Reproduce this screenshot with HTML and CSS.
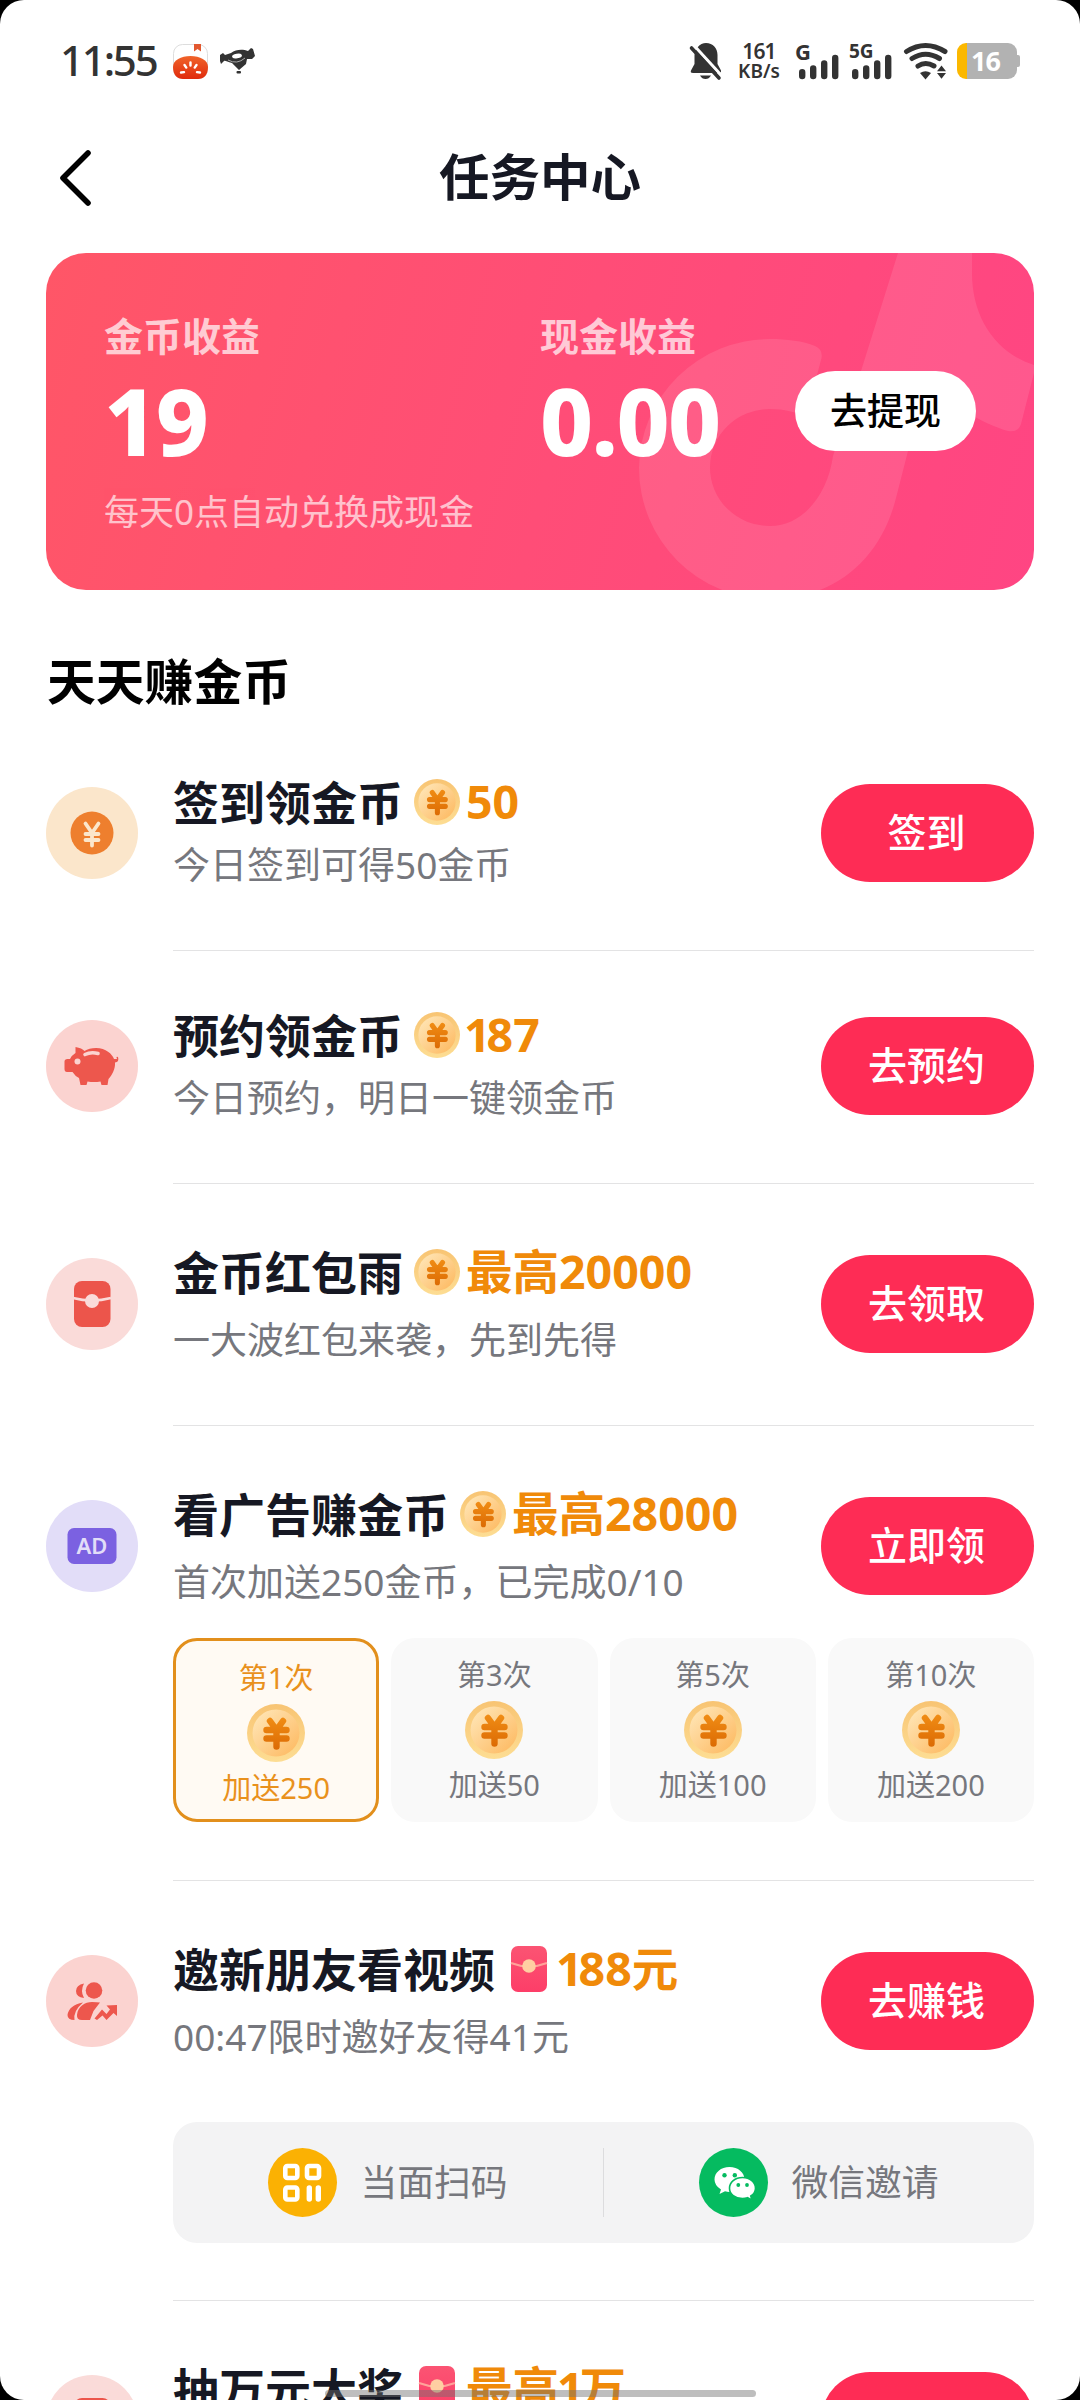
FILE: index.html
```html
<!DOCTYPE html>
<html lang="zh-CN">
<head>
<meta charset="utf-8">
<title>任务中心</title>
<link rel="stylesheet" href="styles.css">
</head>
<body>
<svg class="sprite" aria-hidden="true">
  <defs>
    <linearGradient id="coin-rim" x1="0" y1="0" x2="0" y2="1"><stop offset="0" stop-color="#f8c473"/><stop offset="1" stop-color="#fddd93"/></linearGradient>
    <linearGradient id="coin-face" x1="0" y1="0" x2="1" y2="1"><stop offset="0" stop-color="#ffe9bd"/><stop offset="1" stop-color="#fdb75c"/></linearGradient>
    <linearGradient id="coin-yen" gradientUnits="userSpaceOnUse" x1="0" y1="14" x2="0" y2="45"><stop offset="0" stop-color="#f08c14"/><stop offset="1" stop-color="#dc6b04"/></linearGradient>
    <linearGradient id="packet" x1="0" y1="0" x2="0" y2="1"><stop offset="0" stop-color="#fb5473"/><stop offset="1" stop-color="#fd3e68"/></linearGradient>
    <linearGradient id="tomato" x1="0" y1="0" x2="0" y2="1"><stop offset="0" stop-color="#f0642a"/><stop offset="1" stop-color="#e02a0c"/></linearGradient>
  </defs>
  <symbol id="coin" viewBox="0 0 58 58">
    <circle cx="29" cy="29" r="29" fill="url(#coin-rim)"/>
    <circle cx="29" cy="29" r="23.5" fill="url(#coin-face)"/>
    <path d="M23 17 29.500 26 36 17M19.500 26H39.500M19.500 34.500H39.500M29.500 26V42.500" fill="none" stroke="url(#coin-yen)" stroke-width="6.400" stroke-linecap="round" stroke-linejoin="round"/>
  </symbol>
  <symbol id="envelope" viewBox="0 0 46 46">
    <rect x="5" width="36" height="46" rx="7" fill="url(#packet)"/>
    <path d="M5 17Q23 24 41 17" fill="none" stroke="#ffa39a" stroke-width="2"/>
    <circle cx="23" cy="20" r="6.8" fill="#ffcfa2"/>
  </symbol>
  <symbol id="hongbao" viewBox="0 0 92 92">
    <circle cx="46" cy="46" r="46" fill="#fadbd9"/>
    <rect x="28" y="23" width="36.500" height="46" rx="8" fill="#ec554b"/>
    <path d="M27 40Q46 45 65 40" fill="none" stroke="#fadbd9" stroke-width="2.400"/>
    <circle cx="46" cy="43" r="7" fill="#fadbd9"/>
  </symbol>
</svg>

<div class="screen">
  <header class="status">
    <span class="clock">11:55</span>
    <svg class="app-tomato" viewBox="0 0 35 35">
      <rect x=".5" y=".5" width="34" height="34" rx="9" fill="#fff" stroke="#ddd"/>
      <path d="M0 23C0 16 8 12 17.500 12S35 16 35 23C35 31 31 35 25 35H10C4 35 0 31 0 23Z" fill="url(#tomato)"/>
      <path d="M21 0h7v7.500l-3.500-2.500-3.500 2.500z" fill="#e2582f"/>
      <path d="M17.500 18.500v3M11.500 21l1.800 2.600M23.500 21l-1.800 2.600M8 28.500l3-.4M27 28.500l-3-.4" stroke="#fff" stroke-width="2.400" stroke-linecap="round"/>
    </svg>
    <svg class="app-bird" viewBox="0 0 35 26">
      <path d="M0 7 3 5 5 7 11 5C16 1 23 1 28 3L31 0 33 1 35 8 32 11 27 11 26 16 19 22 12 15C7 14 5 12 4 13L1 16 0 13Z" fill="#333"/>
      <ellipse cx="17" cy="8" rx="5" ry="2.300" fill="#fff" transform="rotate(-10 17 8)"/>
      <path d="M8 12Q17 17 25 10" fill="none" stroke="#aaa" stroke-width="1"/>
      <rect x="16.500" y="23" width="4.500" height="2.500" rx="1" fill="#333"/>
    </svg>
    <div class="status-right">
      <svg class="bell" viewBox="0 0 31 36">
        <path d="M7 5C10 1 13 0 16 0C23 0 27.500 5 27.500 12V21L31 27.500Q31.500 30 29 30H3Q0 30 1 27.500L4.500 21V12Q4.500 8 7 5ZM10 32.500H21Q19 36 15.500 36T10 32.500Z" fill="#333"/>
        <path d="M4.500 3 31.500 32.500" stroke="#fff" stroke-width="3"/>
        <path d="M1.500 5 29 35" stroke="#333" stroke-width="3.600" stroke-linecap="round"/>
      </svg>
      <div class="speed"><span>161</span><span>KB/s</span></div>
      <svg class="signal" viewBox="0 0 43 36">
        <text x="-1" y="16.500" class="net">G</text>
        <path d="M6.200 29.200V33M17.200 25.500V33M28.200 20.500V33M39.200 15V33" stroke="#333" stroke-width="6.400" stroke-linecap="round"/>
      </svg>
      <svg class="signal" viewBox="0 0 43 36">
        <text x="-1" y="14.500" class="net net-5g">5G</text>
        <path d="M5.200 29.200V33M16.200 25.500V33M27.200 20.500V33M38.200 15V33" stroke="#333" stroke-width="6.400" stroke-linecap="round"/>
      </svg>
      <svg class="wifi" viewBox="0 0 44 36">
        <g fill="none" stroke="#333" stroke-width="5" stroke-linecap="round"><path d="M2.500 8.500Q21.500-3.500 41 8.500"/><path d="M8 15.500Q21.500 7 35.500 15.500"/><path d="M14 23Q21.500 18 30 23"/></g>
        <path d="M16 30Q21.500 26.500 27 30L21.500 36.500Z" fill="#333"/>
        <path d="M33 28.300 37.500 22.500 42 28.300ZM33 30 37.500 35.800 42 30Z" fill="#333"/>
      </svg>
      <div class="battery"><span>16</span></div>
    </div>
  </header>

  <nav class="nav">
    <svg class="back" viewBox="0 0 36 60"><path d="M30 5 5 30 30 55" fill="none" stroke="#000" stroke-width="5.600" stroke-linecap="round" stroke-linejoin="round"/></svg>
    <h1>任务中心</h1>
  </nav>

  <section class="wallet">
    <svg class="wallet-mark" viewBox="0 0 988 337"><path fill="#fff" fill-opacity=".1" d="M852 0 815 118 787 203C782 240 758 273 724 273A59.500 58.500 0 0 1 664 214A59.500 58.500 0 0 1 724 156C738 156 750 159 760 164L775 107Q778 97 769 93C757 88 741 86 724 86A131 130 0 0 0 593 215A131 131 0 0 0 724 346C790 346 835 305 850 245L862 198 884 128C905 152 935 170 962 178Q972 180 975 171L988 120V112C950 100 926 65 926 20V0Z"/></svg>
    <div class="earn earn-coin">
      <span class="earn-label">金币收益</span>
      <strong class="earn-value">19</strong>
      <span class="earn-note">每天0点自动兑换成现金</span>
    </div>
    <div class="earn">
      <span class="earn-label">现金收益</span>
      <strong class="earn-value">0.00</strong>
    </div>
    <button class="withdraw">去提现</button>
  </section>

  <h2>天天赚金币</h2>

  <ul class="tasks">
    <li class="task compact">
      <svg class="task-icon" viewBox="0 0 92 92"><circle cx="46" cy="46" r="46" fill="#fbe6cb"/><circle cx="46" cy="46" r="21.500" fill="#ee7f2e"/><path d="M39.500 36.500 46 46 52.500 36.500M39.500 47H52.500M39.500 53H52.500M46 46V58.500" fill="none" stroke="#fbe6cb" stroke-width="3.800" stroke-linecap="round"/></svg>
      <div class="task-body"><div class="task-head">
        <div class="task-text"><p class="task-title">签到领金币<svg class="mark"><use href="#coin"/></svg><b>50</b></p><p class="task-sub">今日签到可得50金币</p></div>
        <button class="go">签到</button>
      </div></div>
    </li>
    <li class="task compact">
      <svg class="task-icon" viewBox="0 0 92 92"><circle cx="46" cy="46" r="46" fill="#fbd3d0"/><path d="M29.500 27Q36 28 38.500 31Q43 28 50 28C60 28 66 34 68 39L71 39Q69.500 36 72 37Q73.500 42 69 42.500C69.500 49 66 55 62.500 59L61.500 65H55.500L54.500 61.500Q48 62.500 41.500 61.500L40.500 65H34.500L33 58Q29 56 26.500 52H21Q18.500 52 18.500 49V41.500Q18.500 39 21.500 39H24Q26 35 29.500 33Z" fill="#ed574d"/><path d="M39 34.500Q45 31.500 52 33.500" stroke="#fbd3d0" stroke-width="3.600" stroke-linecap="round" fill="none"/><circle cx="31.500" cy="41.500" r="3" fill="#fbd3d0"/></svg>
      <div class="task-body"><div class="task-head">
        <div class="task-text"><p class="task-title">预约领金币<svg class="mark"><use href="#coin"/></svg><b><span class="one">1</span>87</b></p><p class="task-sub">今日预约，明日一键领金币</p></div>
        <button class="go">去预约</button>
      </div></div>
    </li>
    <li class="task">
      <svg class="task-icon"><use href="#hongbao"/></svg>
      <div class="task-body"><div class="task-head">
        <div class="task-text"><p class="task-title">金币红包雨<svg class="mark"><use href="#coin"/></svg><b>最高20000</b></p><p class="task-sub">一大波红包来袭，先到先得</p></div>
        <button class="go">去领取</button>
      </div></div>
    </li>
    <li class="task with-steps">
      <svg class="task-icon" viewBox="0 0 92 92"><circle cx="46" cy="46" r="46" fill="#e2ddf8"/><rect x="21.500" y="28" width="49" height="36" rx="6.500" fill="#7b61e1"/><text x="46" y="54" class="ad">AD</text></svg>
      <div class="task-body"><div class="task-head">
        <div class="task-text"><p class="task-title">看广告赚金币<svg class="mark"><use href="#coin"/></svg><b>最高28000</b></p><p class="task-sub">首次加送250金币，已完成0/10</p></div>
        <button class="go">立即领</button>
      </div>
      <div class="steps">
        <div class="step active"><span>第1次</span><svg><use href="#coin"/></svg><span>加送250</span></div>
        <div class="step"><span>第3次</span><svg><use href="#coin"/></svg><span>加送50</span></div>
        <div class="step"><span>第5次</span><svg><use href="#coin"/></svg><span>加送100</span></div>
        <div class="step"><span>第10次</span><svg><use href="#coin"/></svg><span>加送200</span></div>
      </div></div>
    </li>
    <li class="task with-share">
      <svg class="task-icon" viewBox="0 0 92 92"><circle cx="46" cy="46" r="46" fill="#fbd3d0"/><g fill="#ed574d"><circle cx="48" cy="35.500" r="8.300"/><path d="M38 28.500Q30 30 30 36T38 43Q34 36 38 28.500Z"/><path d="M54 47.500 47.500 56 44 65H36Q30.500 65 31 60C32 51 39 47 46 47Q51 47 54 47.500Z"/><path d="M37 47.500Q27 56 28.500 65Q21.500 65 21.500 60Q23 50 37 47.500Z"/><path d="M60.500 50.500 71 50V61L67.500 58 60.500 65 56.500 60.500 51 65 48.500 63.500 56 54.500 60.500 59 64 54.500Z"/></g></svg>
      <div class="task-body"><div class="task-head">
        <div class="task-text"><p class="task-title">邀新朋友看视频<svg class="mark"><use href="#envelope"/></svg><b><span class="one">1</span>88元</b></p><p class="task-sub">00:47限时邀好友得41元</p></div>
        <button class="go">去赚钱</button>
      </div>
      <div class="share">
        <div class="share-item"><svg viewBox="0 0 69 69"><circle cx="34.500" cy="34.500" r="34.500" fill="#fbb103"/><g fill="none" stroke="#fff" stroke-width="4.600"><rect x="17.300" y="18" width="12" height="12" rx="2"/><rect x="39" y="18" width="12" height="12" rx="2"/><rect x="17.300" y="39.500" width="12" height="12" rx="2"/></g><path d="M41.300 39.900V51.100M50.300 39.900V51.100" stroke="#fff" stroke-width="5.400" stroke-linecap="round"/></svg><span>当面扫码</span></div>
        <div class="share-item"><svg viewBox="0 0 69 69"><circle cx="34.500" cy="34.500" r="34.500" fill="#05bb60"/><path d="M30.500 19C22 19 15.500 24.500 15.500 31.500Q15.500 37.500 22 41.500L20.500 46 26 43.300Q29 44.200 31 44C41 43 45.500 38 45.500 31.500C45.500 24.500 39 19 30.500 19Z" fill="#fff"/><path d="M43.500 29.500C36 29.500 30.500 34.300 30.500 40.200S36 50.500 43.500 50.500Q46 50.500 48.500 49.700L53 52.200 51.800 48Q56.500 45 56.500 40.200C56.500 34.300 51 29.500 43.500 29.500Z" fill="#fff" stroke="#05bb60" stroke-width="1.600"/><g fill="#05bb60"><circle cx="25.500" cy="27.300" r="2.200"/><circle cx="35.800" cy="27.300" r="2.200"/><circle cx="39.300" cy="37" r="1.900"/><circle cx="48" cy="37" r="1.900"/></g></svg><span>微信邀请</span></div>
      </div></div>
    </li>
    <li class="task">
      <svg class="task-icon"><use href="#hongbao"/></svg>
      <div class="task-body"><div class="task-head">
        <div class="task-text"><p class="task-title">抽万元大奖<svg class="mark"><use href="#envelope"/></svg><b>最高<span class="one">1</span>万</b></p></div>
        <button class="go"></button>
      </div></div>
    </li>
  </ul>
  <div class="home-bar"></div>
</div>
</body>
</html>
```

FILE: styles.css
```css
* { box-sizing: border-box; margin: 0; padding: 0; }
html, body { width: 1080px; height: 2400px; overflow: hidden; background: #000; }
body { font-family: "Noto Sans", "Noto Sans CJK SC", sans-serif; color: #161823; }
button { border: 0; font-family: inherit; }
svg { display: block; flex: none; overflow: visible; }
.sprite { position: absolute; width: 0; height: 0; }
.screen { position: relative; height: 2400px; overflow: hidden; background: #fff; border-radius: 24px; }

.status { display: flex; align-items: center; height: 122px; padding: 0 60px; }
.clock { width: 113px; padding-bottom: 3px; font-size: 42px; font-weight: 500; letter-spacing: -2.200px; color: #333; }
.app-tomato { width: 35px; height: 35px; }
.app-bird { width: 35px; height: 26px; margin-left: 12px; }
.status-right { display: flex; align-items: center; margin-left: auto; }
.bell { width: 31px; height: 36px; }
.speed { display: flex; flex-direction: column; align-items: center; width: 42px; margin: 0 16px 0 17px; font-weight: 600; color: #333; white-space: nowrap; line-height: 20px; font-size: 19px; }
.speed span:first-child { font-size: 21px; letter-spacing: -.8px; }
.signal { width: 43px; height: 36px; margin-right: 11px; }
.net { font-size: 22px; font-weight: 700; fill: #333; }
.net-5g { font-size: 19px; }
.ad { font-size: 22px; font-weight: 600; fill: #e2ddf8; text-anchor: middle; }
.wifi { width: 44px; height: 36px; margin-right: 9px; }
.battery { width: 60px; height: 36px; margin-right: 3px; padding-right: 3px; border-radius: 9px; background: linear-gradient(90deg, #fbb800 10px, #b2b2b2 10px); color: #fff; font-size: 27px; font-weight: 700; line-height: 36px; text-align: center; letter-spacing: -1px; position: relative; }
.battery::after { content: ""; position: absolute; left: 60px; top: 12px; width: 3px; height: 12px; border-radius: 0 2px 2px 0; background: #b2b2b2; }

.nav { display: grid; grid-template-columns: 36px 1fr 36px; align-items: center; height: 111px; margin: 0 58px 20px; }
.back { width: 36px; height: 60px; }
h1 { padding-bottom: 2px; font-size: 50.500px; font-weight: 700; line-height: 60px; text-align: center; }

.wallet { position: relative; display: grid; grid-template-columns: 436px 1fr auto; align-items: start; height: 337px; margin: 0 46px; padding: 60px 58px 0; border-radius: 40px; overflow: hidden; background: linear-gradient(105deg, #ff5667 0%, #ff4d77 52%, #ff4583 100%); color: #fff; }
.wallet-mark { position: absolute; inset: 0; width: 988px; height: 337px; }
.earn { position: relative; display: flex; flex-direction: column; white-space: nowrap; }
.earn-label { font-size: 39px; font-weight: 700; line-height: 46px; opacity: .7; }
.earn-value { margin: 22px 0 28px; font-size: 92px; font-weight: 800; line-height: 80px; letter-spacing: -1.500px; }
.earn-note { font-size: 35px; font-weight: 400; line-height: 46px; opacity: .65; }
.withdraw { position: relative; width: 181px; height: 80px; margin-top: 58px; padding-bottom: 4px; border-radius: 40px; background: #fff; color: #000; font-size: 37px; font-weight: 500; }

h2 { height: 128px; padding: 61px 47px 0; font-size: 48.800px; font-weight: 700; line-height: 60px; color: #000; }

.tasks { list-style: none; padding: 0 46px; }
.task { display: flex; gap: 35px; }
.task-icon { width: 92px; height: 92px; margin-top: 74px; }
.task-body { flex: 1; padding: 71px 0 72px; border-bottom: 1px solid #e3e3e4; }
.task-head { display: flex; justify-content: space-between; height: 98px; }
.task-text { display: flex; flex-direction: column; gap: 20px; margin-top: -8px; white-space: nowrap; }
.task-title { display: flex; flex: none; align-items: center; height: 50px; font-size: 46px; font-weight: 700; line-height: 44px; }
.task-title b { padding-bottom: 2px; color: #f08a09; font-weight: 700; font-size: 46.500px; }
.one { margin-left: -2px; letter-spacing: -4px; }
.mark { width: 46px; height: 46px; margin: 0 6px 0 11px; }
.task-sub { flex: none; font-size: 37px; font-weight: 400; line-height: 46px; color: #76777d; }
.go { width: 213px; height: 98px; padding: 0 2px 6px 0; border-radius: 49px; background: #fe2c55; color: #fff; font-size: 39px; font-weight: 500; }
.compact .task-icon { margin-top: 69px; }
.compact .task-body { padding: 66px 0 68px; }
.compact .task-text { gap: 15px; margin-top: -7px; }

.with-steps .task-body { padding-bottom: 58px; }
.steps { display: grid; grid-template-columns: repeat(4, 1fr); gap: 12px; margin-top: 43px; }
.step { display: flex; flex-direction: column; align-items: center; height: 184px; padding-top: 19px; border-radius: 24px; background: #f9f9f9; color: #76777d; font-size: 29px; font-weight: 400; line-height: 36px; }
.step svg { width: 58px; height: 58px; margin: 8px 0; }
.step.active { border: 3px solid #e28f1c; background: #fffaf3; color: #e9911c; }

.with-share .task-body { padding-bottom: 57px; }
.share { display: flex; align-items: center; height: 121px; margin-top: 72px; border-radius: 24px; background: #f3f3f4; }
.share-item { display: flex; flex: 1; align-items: center; justify-content: center; gap: 23px; height: 69px; font-size: 36.800px; font-weight: 400; color: #76777d; }
.share-item svg { width: 69px; height: 69px; }
.share-item span { padding-bottom: 5px; }
.share-item + .share-item { border-left: 1px solid #dcdcde; }

.home-bar { position: absolute; left: 325px; bottom: 3px; width: 431px; height: 7px; border-radius: 4px; background: rgba(110, 110, 110, .45); }
```
